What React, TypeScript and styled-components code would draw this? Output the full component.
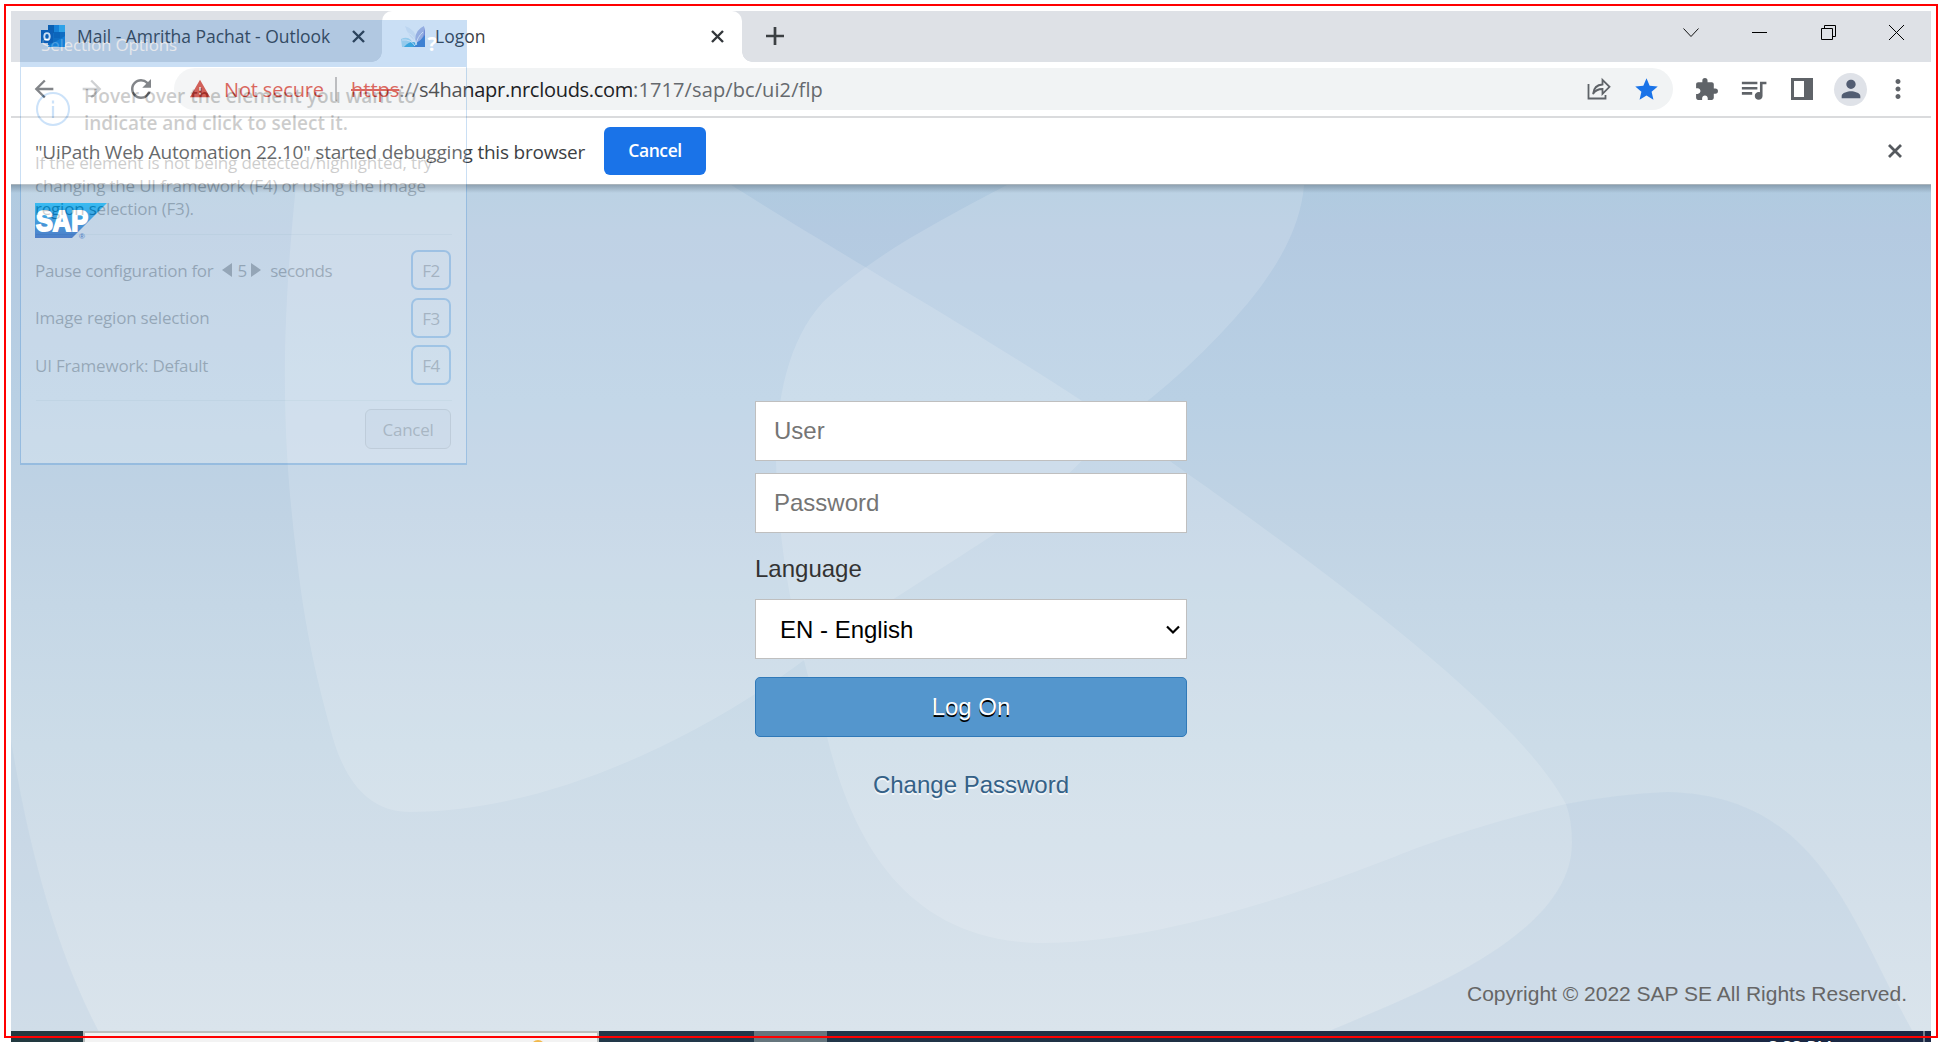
import React from "react";
import styled, { createGlobalStyle } from "styled-components";
import { MdArrowBack, MdArrowForward, MdRefresh, MdWarning, MdStar, MdExtension, MdQueueMusic, MdPerson, MdMoreVert } from "react-icons/md";

const Global = createGlobalStyle`
  *{box-sizing:border-box}
  body{margin:0;background:#fff;overflow:hidden}
`;
const ui = `"Open Sans","Noto Sans",sans-serif`;

/* Text run with its own tracking */
const T = styled.span<{ $ls?: number }>`white-space:pre;letter-spacing:${p => p.$ls ?? 0}px;`;

const Screen = styled.div`position:relative;width:1942px;height:1042px;padding:11px 11px 0;overflow:hidden;background:#fff;`;
const RedFrame = styled.div`position:absolute;left:4px;top:4px;width:1934px;height:1034px;border:2px solid #f00;z-index:5;`;
const Window = styled.div`display:flex;flex-direction:column;width:1920px;height:1031px;font-family:${ui};`;

const Strip = styled.div`height:51px;background:#dee1e6;display:flex;flex:none;`;
const Tab = styled.div<{ $active?: boolean; $w: number; $pl: number }>`
  position:relative;width:${p => p.$w}px;padding:0 ${p => (p.$active ? 18 : 17)}px 1px ${p => p.$pl}px;height:51px;display:flex;align-items:center;
  background:${p => (p.$active ? "#fff" : "transparent")};border-radius:10px 10px 0 0;font-size:17.5px;color:#3c4043;
  svg{flex:none}
`;
const Flare = styled.i<{ $side: "left" | "right" }>`
  position:absolute;bottom:0;${p => p.$side}:-10px;width:10px;height:10px;
  background:radial-gradient(circle at ${p => (p.$side === "left" ? "0 0" : "100% 0")},transparent 9.5px,#fff 10px);
`;
const TabTitle = styled.div<{ $gap: number }>`flex:1;padding-left:${p => p.$gap}px;line-height:24px;margin-top:-1px;`;
const NewTab = styled.div`width:66px;display:flex;align-items:center;justify-content:center;padding:0 1px 1px 0;`;
const Controls = styled.div`margin-left:auto;display:flex;gap:53.5px;padding:13px 27px 0 0;height:30px;`;

const Toolbar = styled.div`height:54px;flex:none;display:flex;align-items:center;padding-left:19px;color:#5f6368;svg{flex:none}`;
const Nav = styled.div`display:flex;width:144px;gap:20px;align-items:center;`;
const Omnibox = styled.div`width:1499px;height:42px;border-radius:21px;background:#f1f3f4;display:flex;align-items:center;padding-left:15px;font-size:20px;`;
const NotSecure = styled.span`color:#d03c32;margin-left:13px;width:99px;white-space:pre;`;
const Bar = styled.i`width:2px;height:24px;background:#a9abae;margin:0 14px 0 12px;`;
const Url = styled.span`color:#65696e;white-space:pre;s{color:#d03c32;text-decoration-thickness:2px}b{font-weight:400;color:#202124}`;
const OmniIcons = styled.div`margin-left:auto;display:flex;align-items:center;gap:22px;padding-right:13px;`;
const ToolIcons = styled.div`display:flex;align-items:center;margin-left:21px;`;
const Music = styled(MdQueueMusic)`margin:0 22px 0 19px;`;
const Avatar = styled.div`width:33px;height:33px;border-radius:50%;background:#dfe2e8;display:flex;align-items:center;justify-content:center;color:#525d72;margin:0 16px 0 21px;`;

const InfoBar = styled.div`height:68px;flex:none;border-top:2px solid #dadbdd;display:flex;align-items:center;padding:0 29px 0 24px;font-size:19px;color:#3c4043;`;
const InfoText = styled.span`width:569px;white-space:pre;padding-top:2px;`;
const BlueButton = styled.button`width:102px;height:48px;border:0;border-radius:6px;background:#1a73e8;color:#fff;font:600 17.5px ${ui};padding:0 0 2px;white-space:pre;`;
const InfoClose = styled.div`margin-left:auto;display:flex;`;

const Page = styled.div`
  position:relative;flex:1;overflow:hidden;border-top:1px solid #aab4bb;
  font-family:"Liberation Sans",Arial,sans-serif;
  background:linear-gradient(#b0cbe0 0,#b4cae1 45px,#b9d0e4 215px,#c0d3e4 330px,#c5d7e6 420px,#ccdce8 560px,#d1dee9 660px,#d7e2eb 780px,#dae4ec 846px);
`;
const Waves = styled.svg`position:absolute;left:0;top:0;`;
const TopShade = styled.div`position:absolute;left:0;right:0;top:0;height:8px;background:linear-gradient(rgba(80,95,110,.42),rgba(80,95,110,0));`;
const Logo = styled.svg`position:absolute;left:24px;top:18px;`;
const Form = styled.form`position:relative;width:432px;margin:216px auto 0;display:flex;flex-direction:column;font-size:24px;`;
const Input = styled.input`
  height:60px;border:1px solid #bfbfbf;background:#fff;padding:0 18px;font:24px "Liberation Sans",Arial,sans-serif;margin-bottom:12px;outline:0;border-radius:0;
  &::placeholder{color:#757575;opacity:1}
`;
const Label = styled.label`color:#333;line-height:28px;margin:10px 0 16px;`;
const Select = styled.div`height:60px;border:1px solid #bfbfbf;background:#fff;color:#000;display:flex;align-items:center;justify-content:space-between;padding:1px 6px 0 24px;`;
const LogOn = styled.button`height:60px;margin-top:18px;border:1px solid #3079b8;border-radius:5px;background:#5496cd;color:#fff;font:24px "Liberation Sans",Arial,sans-serif;text-shadow:0 2px 0 #000;padding:0;`;
const Change = styled.a`margin-top:34px;text-align:center;color:#346187;line-height:28px;text-shadow:0 2px 0 rgba(255,255,255,.75);`;
const Copyright = styled.div`position:absolute;right:24px;bottom:25px;font-size:21px;line-height:24px;color:#666;white-space:pre;`;

const Taskbar = styled.div`height:11px;width:1920px;display:flex;background:linear-gradient(90deg,#22393f,#22384a 35%,#1f3044 60%,#1b2844 85%,#1a2743);overflow:hidden;`;
const Search = styled.div`margin-left:72px;width:516px;height:40px;flex:none;border:2px solid #bcbfbe;background:#f3f3f3;padding:7px 0 0 446px;`;
const Sun = styled.i`display:block;width:14px;height:14px;border-radius:50%;background:#f2b84b;`;
const ActiveApp = styled.div`margin-left:155px;width:73px;background:#66757d;`;
const Clock = styled.div`margin-left:auto;padding:4px 91px 0 0;font:17px/24px ${ui};color:#fff;height:30px;white-space:pre;`;
const Peek = styled.i`width:2px;background:#76808e;margin-right:6px;height:11px;`;

const Dialog = styled.div`
  position:absolute;left:20px;top:20px;width:447px;height:445px;opacity:.22;background:#fff;border:1px solid #1272d0;border-bottom-width:2px;
  font:17px/23px ${ui};color:#1c1c1c;z-index:3;display:flex;flex-direction:column;white-space:pre;
`;
const DHead = styled.div`height:46px;background:#1572d4;color:#fff;display:flex;justify-content:space-between;padding:12px 29px 0 20px;b{font-weight:700;font-size:20px;margin-top:-1px}`;
const DIntro = styled.div`display:flex;padding:16px 0 0 15px;gap:14px;font-size:19px;line-height:27px;font-weight:600;height:86px;svg{margin-top:9px;flex:none}`;
const DPara = styled.div`padding-left:14px;height:77px;display:flex;flex-direction:column;margin-top:-2px;`;
const DRule = styled.div<{ $mt: number; $mb?: number }>`margin:${p => p.$mt}px 14px ${p => p.$mb ?? 0}px 15px;height:1px;flex:none;background:#8aa;opacity:.3;`;
const DRow = styled.div`height:40px;flex:none;margin:0 15px 7.5px 14px;display:flex;align-items:center;`;
const Key = styled.div`margin-left:auto;width:40px;height:40px;border:2px solid #2a8ae0;border-radius:7px;text-align:center;line-height:37px;color:#444;`;
const Spin = styled.span`display:flex;align-items:center;gap:5px;margin:0 9px 0 9px;`;
const DCancel = styled.div`margin:8px 15px 0 auto;width:86px;height:40px;flex:none;border:1px solid #aaa;border-radius:6px;background:#e9ebf3;text-align:center;line-height:39px;color:#444;`;

const X = ({ s, c, w }: { s: number; c: string; w: number }) => (
  <svg width={s} height={s} viewBox={`0 0 ${s} ${s}`} stroke={c} strokeWidth={w}><path d={`M1 1L${s - 1} ${s - 1}M${s - 1} 1L1 ${s - 1}`} /></svg>
);

export default function App() {
  return (
    <Screen>
      <Global />
      <Window>
        <Strip>
          <Tab $w={371} $pl={30}>
            <svg width="24" height="22" viewBox="0 0 24 22">
              <path d="M7 0h17v20H7z" fill="#0f6cbd" /><path d="M7 0h6v8H7z" fill="#0a5aa8" /><path d="M13 0h6v7h-6z" fill="#1a86d9" /><path d="M18 0h6v7h-6z" fill="#35b0ee" /><path d="M13 7h6v6h-6z" fill="#0a62b5" />
              <path d="M7 21l17-10v11H7z" fill="#1583d8" /><path d="M0 5h12v13H0z" fill="#0b5cb0" /><ellipse cx="6" cy="11.4" rx="2.7" ry="3.3" fill="none" stroke="#fff" strokeWidth="1.9" />
            </svg>
            <TabTitle $gap={12}><T $ls={-0.04}>Mail - Amritha Pachat - Outlook</T></TabTitle>
            <X s={13} c="#33373b" w={2.4} />
          </Tab>
          <Tab $active $w={360} $pl={19}>
            <Flare $side="left" />
            <svg width="24" height="22" viewBox="0 0 24 22">
              <path d="M24 2Q23 8 20 12Q14 21 3 22H24z" fill="#8b92d6" /><path d="M0 14Q6 11 10 15L13 22H1z" fill="#b9e4f4" /><path d="M4 1Q15 4 16 17Q7 12 4 1z" fill="#edf2f9" /><path d="M23 1Q12 6 15 19Q25 13 23 1z" fill="#b9bfe6" /><path d="M3 22Q17 20 24 10v12z" fill="#4a86d2" /><path d="M3 22Q10 14 17 19L12 22z" fill="#47b4e2" /><path d="M7 8Q14 11 15 20M22 7Q16 12 15 20M1 15Q10 14 14 21" stroke="#fff" fill="none" strokeWidth=".9" />
            </svg>
            <TabTitle $gap={10}><T>Logon</T></TabTitle>
            <X s={13} c="#33373b" w={2.4} />
            <Flare $side="right" />
          </Tab>
          <NewTab><svg width="18" height="18" viewBox="0 0 18 18" stroke="#3c4043" strokeWidth="2.7"><path d="M9 0v18M0 9h18" /></svg></NewTab>
          <Controls>
            <svg width="16" height="16" viewBox="0 0 16 16" fill="none" stroke="#111"><path d="M.5 4.5L8 12.5L15.500 4.500" /></svg>
            <svg width="15" height="16" viewBox="0 0 15 16" stroke="#000"><path d="M0 8.500h15" /></svg>
            <svg width="15" height="16" viewBox="0 0 15 16" fill="none" stroke="#000"><path d="M.5 4.500h11v11H.5zM3.500 4.500v-3h11v11h-3" /></svg>
            <svg width="15" height="16" viewBox="0 0 15 16" stroke="#000"><path d="M0 1l15 15M15 1L0 16" /></svg>
          </Controls>
        </Strip>
        <Toolbar>
          <Nav><MdArrowBack size={28} /><MdArrowForward size={28} color="#c2c4c7" /><MdRefresh size={30} /></Nav>
          <Omnibox>
            <MdWarning size={22} color="#c5352c" />
            <NotSecure><T $ls={-0.15}>Not secure</T></NotSecure>
            <Bar />
            <Url><s><T>https</T></s><T $ls={-0.05}>://</T><b><T $ls={-0.28}>s4hanapr.nrclouds.com</T></b><T $ls={0.1}>:1717/sap/bc/ui2/flp</T></Url>
            <OmniIcons>
              <svg width="24" height="24" viewBox="0 0 24 24" fill="none" stroke="#5f6368" strokeWidth="1.800"><path d="M1.500 7v14.500h17V18M6 17Q7 8 15.500 7.500V2.800l7 7-7 7V12Q9 12 6 17z" /></svg>
              <MdStar size={27} color="#1a73e8" />
            </OmniIcons>
          </Omnibox>
          <ToolIcons>
            <MdExtension size={25} />
            <Music size={31} />
            <svg width="22" height="22" viewBox="0 0 22 22"><path d="M1.500 1.500h19v19h-19z" fill="#fff" stroke="#5f6368" strokeWidth="3" /><path d="M13 1h8v20h-8z" fill="#5f6368" /></svg>
            <Avatar><MdPerson size={28} /></Avatar>
            <MdMoreVert size={30} />
          </ToolIcons>
        </Toolbar>
        <InfoBar>
          <InfoText><T $ls={-0.22}>{'"UiPath Web Automation 22.10" started debugging this browser'}</T></InfoText>
          <BlueButton><T $ls={-0.4}>Cancel</T></BlueButton>
          <InfoClose><X s={14} c="#55595e" w={2.8} /></InfoClose>
        </InfoBar>
        <Page>
          <Waves width="1920" height="847" viewBox="11 185 1920 847">
            <g fill="#fff" fillOpacity=".15">
              <path d="M296 185C280 340 282 440 297 560C306 640 322 700 335 745C350 790 375 812 410 812C540 812 690 745 803 661C860 618 930 577 996 533Q1060 488 1117 424C1000 345 900 290 731 185Z" />
              <path d="M1007 185C930 225 870 258 823 302C788 340 776 400 776 460C778 560 800 660 827 737C850 830 900 943 1044 943C1190 942 1380 862 1417 848Q1490 822 1566 804C1510 700 1290 545 1117 424Q1190 372 1248 303Q1300 240 1304 185Z" />
            </g>
            <path d="M1566 804Q1618 794 1667 792C1820 795 1850 920 1913 1032H1327C1400 1000 1572 940 1572 843Q1572 820 1566 804Z" fill="#a9c3dc" fillOpacity=".2" />
            <path d="M11 740Q40 920 99 1032H11Z" fill="#a9c3dc" fillOpacity=".2" />
          </Waves>
          <TopShade />
          <Logo width="76" height="38" viewBox="0 0 76 38">
            <defs><linearGradient id="sap" x2="0" y2="1"><stop stopColor="#00a8ee" /><stop offset="1" stopColor="#1d59b8" /></linearGradient></defs>
            <path d="M0 0h72L37 35H0z" fill="url(#sap)" />
            <text x="1" y="28" fontFamily="Liberation Sans" fontWeight="700" fontSize="30" textLength="52" lengthAdjust="spacingAndGlyphs" fill="#fff" stroke="#fff" strokeWidth="2">SAP</text>
            <text x="44" y="36" fontFamily="Liberation Sans" fontWeight="700" fontSize="8" fill="#2c66b8">®</text>
          </Logo>
          <Form>
            <Input placeholder="User" />
            <Input placeholder="Password" />
            <Label>Language</Label>
            <Select>EN - English<svg width="14" height="10" viewBox="0 0 14 10" fill="none" stroke="#000" strokeWidth="2.200"><path d="M1 1.500l6 6 6-6" /></svg></Select>
            <LogOn type="button">Log On</LogOn>
            <Change>Change Password</Change>
          </Form>
          <Copyright>Copyright © 2022 SAP SE All Rights Reserved.</Copyright>
        </Page>
        <Taskbar>
          <Search><Sun /></Search>
          <ActiveApp />
          <Clock>3:33 PM</Clock>
          <Peek />
        </Taskbar>
      </Window>
      <Dialog>
        <DHead><T $ls={-0.18}>Selection Options</T><b>?</b></DHead>
        <DIntro>
          <svg width="34" height="34" viewBox="0 0 34 34"><circle cx="17" cy="17" r="16" fill="none" stroke="#1a80e8" strokeWidth="2" /><path d="M17 14v12M17 8.500v3" stroke="#1a80e8" strokeWidth="2.200" /></svg>
          <div><T $ls={0.03}>Hover over the element you want to</T><br /><T>indicate and click to select it.</T></div>
        </DIntro>
        <DPara>
          <T $ls={-0.17}>If the element is not being detected/highlighted, try</T>
          <T $ls={-0.18}>changing the UI framework (F4) or using the Image</T>
          <T $ls={-0.2}>region selection (F3).</T>
        </DPara>
        <DRule $mt={6} $mb={15} />
        <DRow>
          <T $ls={-0.3}>Pause configuration for</T>
          <Spin><svg width="10" height="14"><path d="M10 0v14L0 7z" fill="#222" /></svg><T $ls={-1}>5</T><svg width="10" height="14"><path d="M0 0v14l10-7z" fill="#222" /></svg></Spin>
          <T $ls={-0.4}>seconds</T>
          <Key><T $ls={-0.5}>F2</T></Key>
        </DRow>
        <DRow><T $ls={-0.2}>Image region selection</T><Key><T $ls={-0.5}>F3</T></Key></DRow>
        <DRow><T $ls={-0.2}>{"UI Framework: "}</T><T $ls={-0.3}>Default</T><Key><T $ls={-0.5}>F4</T></Key></DRow>
        <DRule $mt={7} />
        <DCancel><T $ls={-0.3}>Cancel</T></DCancel>
      </Dialog>
      <RedFrame />
    </Screen>
  );
}
